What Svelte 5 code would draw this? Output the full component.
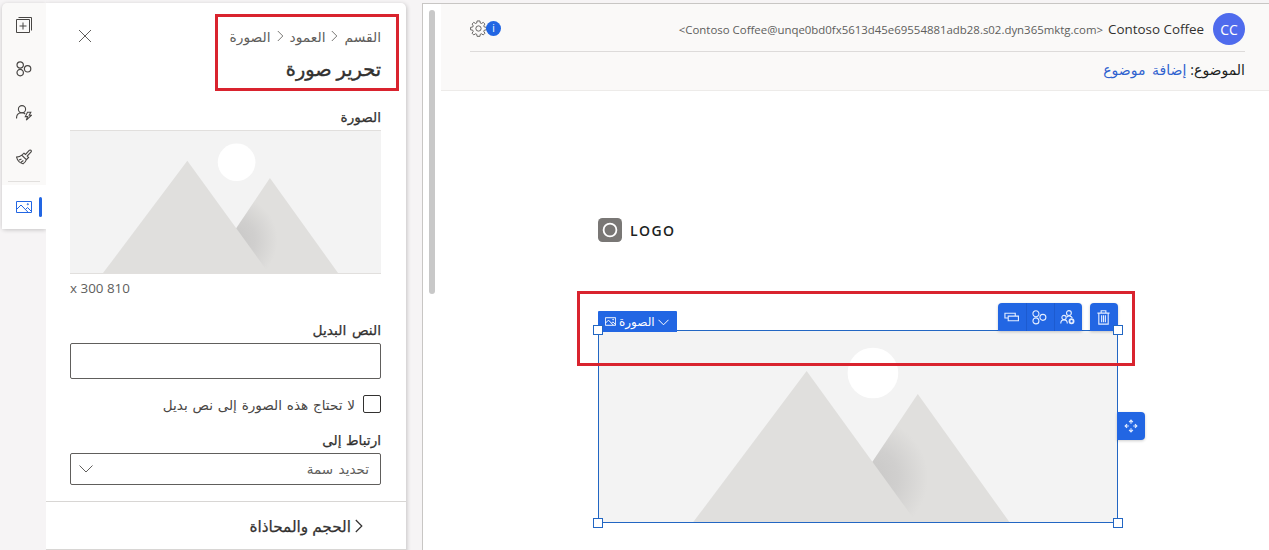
<script>
  const corners = ['tl', 'tr', 'bl', 'br'];
</script>

{#snippet pictureIcon()}
  <svg viewBox="0 0 16 16" fill="none" stroke="currentColor">
    <path d="M.5 2.5h15v11H.5zM.5 10.5 5 6l7 7.2M9.5 10.5l2-2 4 4" /><circle cx="11.8" cy="5.2" r=".6" />
  </svg>
{/snippet}

{#snippet flowIcon()}
  <svg viewBox="0 0 16 16" fill="none" stroke="currentColor" stroke-width="1.2">
    <circle cx="4.2" cy="4" r="3.2" /><circle cx="4.2" cy="11.6" r="3.2" /><circle cx="11.6" cy="7.8" r="3.2" />
  </svg>
{/snippet}

{#snippet placeholder(id)}
  <svg class="art" viewBox="0 0 311 143.2">
    <defs>
      <radialGradient id={id} cx="163" cy="110" r="45" gradientUnits="userSpaceOnUse">
        <stop offset="0" stop-color="#c8c7c6" /><stop offset=".5" stop-color="#d0cfce" /><stop offset="1" stop-color="#e0dfdd" />
      </radialGradient>
    </defs>
    <circle cx="166.7" cy="31.5" r="19" fill="#fff" />
    <path d="M200.3 47.3 269 143.2H136z" fill="url(#{id})" />
    <path d="M117 30 199 143.2H32z" fill="#e0dfdd" />
  </svg>
{/snippet}

<div class="app">
  <nav class="rail">
    <span class="tool"><svg viewBox="0 0 16 16" fill="none" stroke="currentColor"><path d="M.5 2.500h13v13H.5zM2.500.5h13v13M7 5.500v7M3.500 9h7" /></svg></span>
    <span class="tool">{@render flowIcon()}</span>
    <span class="tool"><svg viewBox="0 0 16 16" fill="none" stroke="currentColor" stroke-width="1.100"><circle cx="6" cy="4.200" r="3.600" /><path d="M.5 13.400c0-3.500 2.200-5.600 5.500-5.600 1.500 0 2.500.5 3.200 1.200M11.500 7.200h3.300l-1.600 3h2.300l-5.200 5 1.300-3.600H9.300z" /></svg></span>
    <span class="tool"><svg viewBox="0 0 16 16" fill="none" stroke="currentColor" stroke-width="1.100"><path d="m8 4.200 1.500 1.200 3.700-4.100c1-.9 2.700.3 1.900 1.600L11.200 7l1.400 1.500-2.200 2.200L5.800 6.200zM5.800 6.200c-1.500 1.400-3.100 1.800-5.300 1.900 1 3.700 3.200 5.900 6.500 6.700 1.900-1.200 2.900-2.500 3.400-4.100M3 11l2.500-1M5 13.200l2.400-1.700" /></svg></span>
    <span class="rule"></span>
    <span class="tool active">{@render pictureIcon()}</span>
  </nav>

  <aside class="panel" dir="rtl">
    <div class="top">
      <header class="heading">
        <div class="crumbs">
          <span>القسم</span>
          <svg viewBox="0 0 7 12"><path d="m.8 1 5 5-5 5" /></svg>
          <span>العمود</span>
          <svg viewBox="0 0 7 12"><path d="m.8 1 5 5-5 5" /></svg>
          <span>الصورة</span>
        </div>
        <h1>تحرير صورة</h1>
      </header>
      <svg class="close" viewBox="0 0 14 14"><path d="m1 1 12 12M13 1 1 13" /></svg>
    </div>
    <div class="form">
      <div class="label">الصورة</div>
      <div class="preview">{@render placeholder('shade-small')}</div>
      <div class="size" dir="ltr">x 300 810</div>
      <div class="label alt">النص البديل</div>
      <div class="input"></div>
      <div class="check"><i></i><span>لا تحتاج هذه الصورة إلى نص بديل</span></div>
      <div class="label link">ارتباط إلى</div>
      <div class="select"><span>تحديد سمة</span><svg viewBox="0 0 14 8"><path d="m.5.500 6.500 6.500L13.500.5" /></svg></div>
    </div>
    <div class="section"><svg viewBox="0 0 8 14"><path d="m.8 1 6 6-6 6" /></svg><span>الحجم والمحاذاة</span></div>
  </aside>

  <main class="canvas">
    <div class="scroll"></div>
    <div class="email">
      <header class="mailhead">
        <div class="from">
          <svg class="gear" viewBox="0 0 18 18" fill="none" stroke="currentColor"><path d="M7.500 1h3l.4 2.200 1.200.5L14 2.500 15.800 4.300l-1.200 1.900.5 1.200 2.300.4v2.600l-2.300.4-.5 1.300 1.200 1.900-1.800 1.800-1.900-1.200-1.200.5-.4 2.200h-3l-.4-2.200-1.200-.5L4 15.800 2.200 14l1.200-1.900-.5-1.300L.6 10.400V7.800l2.300-.4.5-1.200L2.200 4.300 4 2.500l1.900 1.200 1.200-.5z" /><circle cx="9" cy="9" r="2.800" /></svg>
          <b class="info">i</b>
          <span class="addr">&lt;Contoso Coffee@unqe0bd0fx5613d45e69554881adb28.s02.dyn365mktg.com&gt;</span>
          <span class="name">Contoso Coffee</span>
          <span class="avatar">CC</span>
        </div>
        <div class="subject" dir="rtl"><span>الموضوع:</span><a>إضافة موضوع</a></div>
      </header>
      <div class="body">
        <div class="logo">
          <svg viewBox="0 0 24 24"><rect width="24" height="24" rx="4.500" fill="#797775" /><circle cx="12" cy="12" r="6.400" fill="none" stroke="#fff" stroke-width="1.800" /></svg>
          <span>LOGO</span>
        </div>
        <div class="block">
          {@render placeholder('shade-large')}
          <div class="tag">{@render pictureIcon()}<span>الصورة</span><svg class="chev" viewBox="0 0 11 7"><path d="m.5.800 5 5 5-5" fill="none" stroke="currentColor" /></svg></div>
          <div class="bar">
            <div class="group">
              <span><svg viewBox="0 0 16 16" fill="none" stroke="currentColor" stroke-width="1.200"><path d="M4.500 8.500H1v-5h11v3M4.500 6.500h10.900v5H4.500z" /></svg></span>
              <span>{@render flowIcon()}</span>
              <span><svg viewBox="0 0 16 16" fill="none" stroke="currentColor" stroke-width="1.200"><circle cx="9.500" cy="3.300" r="2.600" /><circle cx="4.300" cy="8" r="2.300" /><path d="M.8 14.500c0-2.700 1.200-4 3.500-4s3.500 1.300 3.500 4M7.200 7.500c2-1.700 5-1.300 5.900 1" /><circle cx="12.300" cy="12" r="2.200" stroke-width="1.900" /></svg></span>
            </div>
            <div class="group"><span><svg viewBox="0 0 16 16" fill="none" stroke="currentColor" stroke-width="1.200"><path d="M1.500 3.300h13M5.500 3V.8h5V3M3 3.300V15h10V3.300M6 5.500v7.500M8 5.500v7.500M10 5.500v7.500" /></svg></span></div>
          </div>
          <div class="move"><svg viewBox="0 0 16 16" fill="none" stroke="currentColor" stroke-width="1.300"><path d="M8 5.500v-4M5.800 3.500 8 1.300l2.200 2.200M8 10.500v4M5.800 12.500 8 14.700l2.200-2.200M5.500 8h-4M3.500 5.800 1.300 8l2.200 2.200M10.500 8h4M12.500 5.800 14.700 8l-2.200 2.200" /></svg></div>
          {#each corners as c}<i class="handle {c}"></i>{/each}
        </div>
      </div>
    </div>
  </main>
  <div class="mark crumb-mark"></div>
  <div class="mark tool-mark"></div>
</div>

<style>
  :global(body) { margin: 0; overflow: hidden; }
  * { box-sizing: border-box; }
  svg { display: block; flex: none; }
  .app { position: relative; display: flex; width: 1269px; height: 550px; padding: 3px 0 0 2px; overflow: hidden; background: #f6f4f5; font-family: "Open Sans", "DejaVu Sans", sans-serif; color: #323130; }
  .rail { width: 44px; height: 226px; flex: none; display: flex; flex-direction: column; background: #faf9f8; border-radius: 5px 0 0 4px; box-shadow: 0 1px 4px #0003; color: #484644; }
  .tool { height: 44px; display: flex; align-items: center; padding-left: 14px; }
  .tool svg { width: 16px; height: 16px; }
  .rule { height: 1px; margin: 2px 6px 3px; background: #e1dfdd; flex: none; }
  .active { position: relative; background: #fff; color: #2266e3; height: 44px; }
  .active::after { content: ""; width: 3px; height: 20px; margin-left: 7px; border-radius: 2px; background: #2266e3; }
  .panel { width: 360px; height: 600px; flex: none; background: #fff; border-radius: 0 5px 0 0; box-shadow: 1px 1px 4px #0003; clip-path: inset(-5px -8px 0 0); }
  .top { display: flex; justify-content: space-between; padding: 20px 25px 0 33px; height: 101px; }
  .close { width: 14px; height: 14px; margin-top: 6px; margin-left: -1px; fill: none; stroke: #605e5c; }
  .crumbs { display: flex; align-items: center; gap: 6px; height: 26px; font-size: 13.800px; color: #605e5c; }
  .crumbs svg { width: 7px; height: 12px; }
  .crumbs path, .select path { fill: none; stroke: #605e5c; }
  .section path { fill: none; stroke: #323130; stroke-width: 1.200; }
  .crumbs path { stroke: #797775; }
  h1 { margin: 5px 0 0; font-size: 19.300px; line-height: 30px; font-weight: 400; -webkit-text-stroke: .4px; }
  .form { padding: 0 25px 0 24px; }
  .label { height: 26px; line-height: 25px; font-size: 13.600px; word-spacing: 1px; -webkit-text-stroke: .25px; }
  .preview { height: 144px; border: solid #e1dfdd; border-width: 1px 0; background: #f3f3f3; }
  .art { width: 100%; height: 100%; }
  .size { height: 29px; line-height: 29px; font-size: 13.400px; color: #605e5c; }
  .alt { margin-top: 14px; word-spacing: 2px; font-size: 13.800px; }
  .input { height: 36px; border: 1px solid #605e5c; border-radius: 2px; }
  .check { display: flex; gap: 8px; align-items: center; height: 18px; margin-top: 16px; font-size: 13.600px; word-spacing: 1.200px; color: #484644; }
  .check i { width: 18px; height: 18px; border: 1px solid #323130; border-radius: 2px; }
  .link { margin-top: 14px; }
  .select { display: flex; align-items: center; justify-content: space-between; height: 32px; padding: 0 11px 0 8px; border: 1px solid #605e5c; border-radius: 2px; font-size: 13.500px; word-spacing: 2px; color: #605e5c; }
  .select svg { width: 14px; height: 8px; }
  .section { display: flex; align-items: center; gap: 4px; height: 49px; margin-top: 16px; padding-right: 43px; border: solid #d8d6d4; border-width: 1px 0; font-size: 15.300px; -webkit-text-stroke: .25px; }
  .section svg { width: 8px; height: 14px; }
  .canvas { display: flex; flex: 1; margin-left: 16px; background: #fff; border: solid #c8c6c4; border-width: 1px 0 0 1px; height: 560px; }
  .scroll { width: 6px; height: 284px; margin: 6px 6px 0; border-radius: 3px; background: #c8c8c8; }
  .email { flex: 1; }
  .mailhead { height: 87px; padding: 0 24px 0 29px; background: #faf9f8; border-bottom: 1px solid #edebe9; }
  .from { display: flex; align-items: center; height: 48px; border-bottom: 1px solid #dddbda; padding-top: 2px; }
  .gear { width: 17px; height: 17px; margin-right: -1px; color: #605e5c; }
  .info { width: 15px; height: 15px; border-radius: 50%; background: #2266e3; color: #fff; font-size: 10px; line-height: 15px; text-align: center; font-weight: 400; }
  .addr { margin-left: auto; padding-top: 2px; font-size: 11.430px; color: #605e5c; white-space: nowrap; }
  .name { margin: 0 9px 0 5px; padding-top: 1px; font-size: 13.400px; white-space: nowrap; }
  .avatar { width: 32px; height: 32px; border-radius: 50%; background: #4f6bed; color: #fff; font-size: 14px; line-height: 33px; text-align: center; }
  .subject { display: flex; gap: 4px; height: 38px; line-height: 35px; font-size: 14px; color: #201f1e; }
  .subject a { color: #2f62cf; word-spacing: 3px; }
  .body { padding: 127px 151px 0 157px; }
  .logo { display: flex; align-items: center; gap: 8px; height: 24px; font-size: 14px; font-weight: 600; letter-spacing: 1.400px; color: #201f1e; }
  .logo svg { width: 24px; height: 24px; }
  .block { position: relative; height: 193px; margin-top: 88px; border: 1px solid #2266c3; background: #f3f3f3; }
  .tag { position: absolute; left: -1px; top: -20px; display: flex; align-items: center; gap: 3px; width: 79px; height: 21px; padding: 0 0 1px 7px; background: #2266e3; color: #fff; font-size: 12px; border-radius: 1px 1px 0 0; }
  .tag svg { width: 11px; height: 11px; stroke-width: 1.400; }
  .tag .chev { height: 7px; margin-top: 3px; stroke-width: 1; }
  .bar { position: absolute; right: -1px; top: -28px; display: flex; gap: 8px; }
  .group { display: flex; height: 28px; overflow: hidden; background: #2266e3; color: #e4edff; border-radius: 4px 4px 0 0; box-shadow: 0 1px 3px #0003; }
  .group span { display: flex; align-items: center; justify-content: center; width: 28px; padding-right: 1px; }
  .group span + span { border-left: 1px solid #1d5bd0; padding-right: 2px; }
  .group svg { width: 15px; height: 15px; }
  .move { position: absolute; left: 518px; top: 81px; width: 28px; height: 28px; display: flex; align-items: center; justify-content: center; background: #2266e3; color: #e4edff; border-radius: 0 4px 4px 0; box-shadow: 0 1px 3px #0003; }
  .move svg { width: 14px; height: 14px; }
  .handle { position: absolute; width: 10px; height: 10px; background: #fff; border: 1px solid #2266c3; }
  .tl { left: -6px; top: -6px; } .tr { right: -6px; top: -6px; } .bl { left: -6px; bottom: -6px; } .br { right: -6px; bottom: -6px; }
  .mark { position: absolute; border: 3px solid #d9232e; }
  .crumb-mark { left: 215px; top: 14px; width: 184px; height: 77px; }
  .tool-mark { left: 577px; top: 291px; width: 558px; height: 75px; }
</style>
